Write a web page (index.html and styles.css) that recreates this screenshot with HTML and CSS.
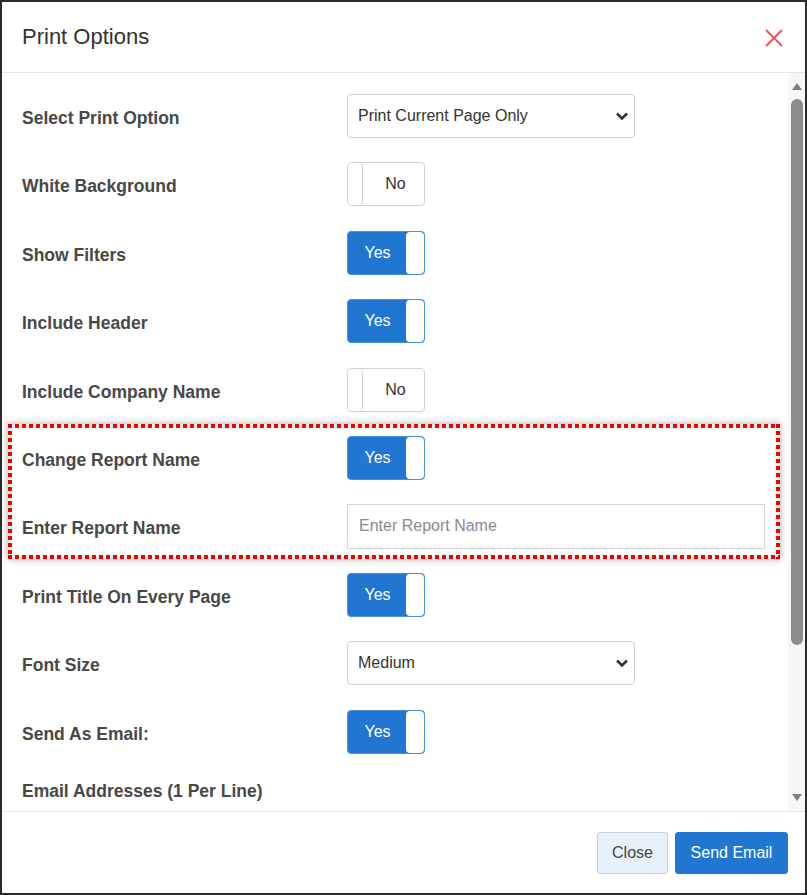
FILE: index.html
```html
<!DOCTYPE html>
<html lang="en">
<head>
    <meta charset="UTF-8">
    <meta name="viewport" content="width=device-width, initial-scale=1.0">
    <title>Print Options</title>
    <link rel="stylesheet" href="styles.css">
</head>
<body>

    <div class="modal">
        <!-- Cabecera -->
        <div class="modal-header">
            <h2>Print Options</h2>
            <span class="close-x">
                <svg width="18" height="18" viewBox="0 0 18 18"><path d="M1 1L17 17M17 1L1 17" stroke="#e25654" stroke-width="1.8" fill="none"/></svg>
            </span>
        </div>

        <!-- Cuerpo -->
        <div class="modal-body">
            <div class="options">
                <div class="row">
                    <label>Select Print Option</label>
                    <div class="select-box wide">
                        <span>Print Current Page Only</span>
                        <svg class="chevron" width="14" height="10" viewBox="0 0 14 10"><path d="M2 2.5L7 7.5L12 2.5" stroke="#333" stroke-width="2.6" fill="none"/></svg>
                    </div>
                </div>
                <div class="row">
                    <label>White Background</label>
                    <div class="toggle off"><span class="knob"></span><span class="txt">No</span></div>
                </div>
                <div class="row">
                    <label>Show Filters</label>
                    <div class="toggle on"><span class="txt">Yes</span><span class="knob"></span></div>
                </div>
                <div class="row">
                    <label>Include Header</label>
                    <div class="toggle on"><span class="txt">Yes</span><span class="knob"></span></div>
                </div>
                <div class="row">
                    <label>Include Company Name</label>
                    <div class="toggle off"><span class="knob"></span><span class="txt">No</span></div>
                </div>

                <div class="highlight">
                    <div class="row">
                        <label>Change Report Name</label>
                        <div class="toggle on"><span class="txt">Yes</span><span class="knob"></span></div>
                    </div>
                    <div class="row">
                        <label>Enter Report Name</label>
                        <input class="text-input" type="text" placeholder="Enter Report Name">
                    </div>
                </div>

                <div class="row">
                    <label>Print Title On Every Page</label>
                    <div class="toggle on"><span class="txt">Yes</span><span class="knob"></span></div>
                </div>
                <div class="row">
                    <label>Font Size</label>
                    <div class="select-box wide">
                        <span>Medium</span>
                        <svg class="chevron" width="14" height="10" viewBox="0 0 14 10"><path d="M2 2.5L7 7.5L12 2.5" stroke="#333" stroke-width="2.6" fill="none"/></svg>
                    </div>
                </div>
                <div class="row">
                    <label>Send As Email:</label>
                    <div class="toggle on"><span class="txt">Yes</span><span class="knob"></span></div>
                </div>
                <div class="row-full">
                    <label>Email Addresses (1 Per Line)</label>
                </div>
            </div>

            <!-- Barra de desplazamiento -->
            <div class="scrollbar">
                <span class="arrow up"></span>
                <div class="track"><div class="thumb"></div></div>
                <span class="arrow down"></span>
            </div>
        </div>

        <!-- Pie -->
        <div class="modal-footer">
            <button class="btn btn-light">Close</button>
            <button class="btn btn-primary">Send Email</button>
        </div>
    </div>

</body>
</html>
```

FILE: styles.css
```css
/* Estilos generales */
body {
    margin: 0;
    padding: 0;
    background-color: #fff;
    font-family: "Liberation Sans", Arial, sans-serif;
}

.modal {
    width: 807px;
    height: 895px;
    box-sizing: border-box;
    border: 2px solid #2b2b2b;
    display: flex;
    flex-direction: column;
    background-color: #fff;
}

/* Cabecera */
.modal-header {
    height: 70px;
    border-bottom: 1px solid #e6e6e6;
    display: flex;
    align-items: center;
    justify-content: space-between;
    padding: 0 22px 0 20px;
}

.modal-header h2 {
    margin: 0;
    font-size: 22px;
    font-weight: normal;
    color: #333;
}

.close-x {
    display: flex;
    margin-top: 1px;
}

/* Cuerpo */
.modal-body {
    flex: 1;
    display: flex;
    overflow: hidden;
}

.options {
    flex: 1;
    padding: 21px 22px 0 20px;
    display: flex;
    flex-direction: column;
    gap: 24.4px;
}

.row {
    display: flex;
    align-items: center;
    height: 44px;
}

.row label,
.row-full label {
    width: 325px;
    flex-shrink: 0;
    font-size: 17.5px;
    font-weight: bold;
    color: #484848;
    padding-top: 5px;
}

.row-full label {
    width: auto;
    line-height: 26px;
    padding-top: 0;
}

/* Recuadro rojo */
.highlight {
    display: flex;
    flex-direction: column;
    gap: 24.4px;
    margin: -12px -14px -11px -14px;
    padding: 12px 14px 11px 14px;
    background:
        repeating-linear-gradient(90deg, #ff0000 0 4px, transparent 4px 7px) top left / 100% 4px no-repeat,
        repeating-linear-gradient(90deg, #ff0000 0 4px, transparent 4px 7px) bottom left / 100% 4px no-repeat,
        repeating-linear-gradient(180deg, #ff0000 0 4px, transparent 4px 7px) top left / 4px 100% no-repeat,
        repeating-linear-gradient(180deg, #ff0000 0 4px, transparent 4px 7px) top right / 4px 100% no-repeat;
    box-shadow: 0 0 7px rgba(0, 0, 0, 0.35), inset 0 0 7px rgba(0, 0, 0, 0.22);
}

/* Select */
.select-box {
    position: relative;
    box-sizing: border-box;
    height: 44px;
    border: 1px solid #d2d2d2;
    border-radius: 4px;
    display: flex;
    align-items: center;
    padding-left: 10px;
    font-size: 16px;
    color: #333;
}

.select-box.wide {
    width: 288px;
}

.chevron {
    position: absolute;
    right: 5px;
    top: 16px;
}

/* Interruptores */
.toggle {
    box-sizing: border-box;
    width: 78px;
    height: 44px;
    border-radius: 4px;
    display: flex;
    overflow: hidden;
    font-size: 16px;
}

.toggle .txt {
    flex: 1;
    display: flex;
    align-items: center;
    justify-content: center;
}

.toggle.on {
    background-color: #2176d2;
    border: 1px solid #4a92e0;
    color: #fff;
}

.toggle.on .txt {
    padding-left: 1px;
}

.toggle.on .knob {
    width: 18px;
    background-color: #fff;
    border-radius: 4px;
}

.toggle.off {
    background-color: #fff;
    border: 1px solid #d2d2d2;
    color: #333;
}

.toggle.off .txt {
    padding-left: 4px;
}

.toggle.off .knob {
    width: 14px;
    border-right: 1px solid #d2d2d2;
    border-radius: 4px;
}

.text-input {
    box-sizing: border-box;
    width: 418px;
    height: 45px;
    border: 1px solid #d6d6d6;
    padding: 0 11px;
    font-family: "Liberation Sans", Arial, sans-serif;
    font-size: 16px;
    color: #333;
    outline: none;
}

.text-input::placeholder {
    color: #8a8a8a;
}

/* Barra de desplazamiento */
.scrollbar {
    width: 17px;
    background-color: #f7f7f7;
    display: flex;
    flex-direction: column;
    align-items: center;
}

.arrow {
    width: 0;
    height: 0;
    border-left: 5px solid transparent;
    border-right: 5px solid transparent;
}

.arrow.up {
    margin-top: 10px;
    border-bottom: 7px solid #7e7e7e;
}

.arrow.down {
    margin-bottom: 10px;
    border-top: 7px solid #7e7e7e;
}

.track {
    flex: 1;
    width: 100%;
    display: flex;
    justify-content: center;
    padding-top: 9px;
}

.thumb {
    width: 12px;
    height: 546px;
    background-color: #8c8c8c;
    border-radius: 6px;
}

/* Pie */
.modal-footer {
    height: 81px;
    border-top: 1px solid #e6e6e6;
    display: flex;
    align-items: center;
    justify-content: flex-end;
    gap: 7px;
    padding-right: 17px;
}

.btn {
    height: 42px;
    font-family: "Liberation Sans", Arial, sans-serif;
    font-size: 16px;
    border-radius: 3px;
    cursor: pointer;
    padding: 0;
}

.btn-light {
    width: 71px;
    background-color: #e7f1fb;
    border: 1px solid #cdcdcd;
    color: #444;
}

.btn-primary {
    width: 113px;
    background-color: #2176d2;
    border: 1px solid #2176d2;
    color: #fff;
}
```
